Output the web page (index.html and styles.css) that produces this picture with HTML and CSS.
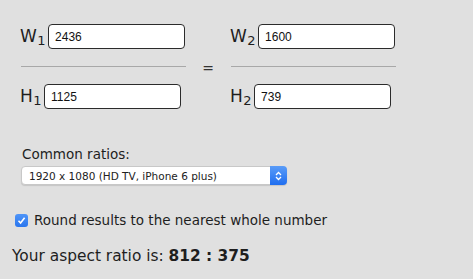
FILE: index.html
```html
<html>
<head>
<meta charset="utf-8">
<title>Aspect Ratio Calculator</title>
<link rel="stylesheet" href="styles.css">
</head>
<body>

<div id="calc">
	<div class="fraction">
		<div class="row">
			<span class="dim">W<sub>1</sub></span>
			<input class="num" type="text" value="2436">
		</div>
		<div class="bar"></div>
		<div class="row">
			<span class="dim">H<sub>1</sub></span>
			<input class="num" type="text" value="1125">
		</div>
	</div>

	<div class="equals">=</div>

	<div class="fraction">
		<div class="row">
			<span class="dim">W<sub>2</sub></span>
			<input class="num" type="text" value="1600">
		</div>
		<div class="bar"></div>
		<div class="row">
			<span class="dim">H<sub>2</sub></span>
			<input class="num" type="text" value="739">
		</div>
	</div>
</div>

<div id="ratios">
	<div class="caption">Common ratios:</div>
	<div class="picker">
		<select>
			<option>1920 x 1080 (HD TV, iPhone 6 plus)</option>
		</select>
		<span class="stepper">
			<svg width="7" height="10" viewBox="0 0 7 10">
				<path d="M1 4 L3.5 1.5 L6 4" fill="none" stroke="white" stroke-width="1.3"/>
				<path d="M1 6 L3.5 8.5 L6 6" fill="none" stroke="white" stroke-width="1.3"/>
			</svg>
		</span>
	</div>
</div>

<label class="round">
	<span class="box">
		<svg width="9" height="9" viewBox="0 0 9 9">
			<path d="M1.5 4.8 L3.6 7 L7.6 1.8" fill="none" stroke="white" stroke-width="1.6"/>
		</svg>
	</span>
	Round results to the nearest whole number
</label>

<div class="result">Your aspect ratio is: <b>812 : 375</b></div>

</body>
</html>
```

FILE: styles.css
```css
body {
	margin: 0;
	background-color: #e0e0e0;
	color: #1e1e1e;
	font-family: "DejaVu Sans", Verdana, sans-serif;
}

#calc {
	display: flex;
	align-items: center;
	padding: 24px 0 0 20px;
}

.fraction {
	display: flex;
	flex-direction: column;
	width: 166px;
}

.row {
	display: flex;
	align-items: center;
	height: 25px;
}

.dim {
	font-size: 17px;
	line-height: 25px;
	margin-right: 3px;
	letter-spacing: -0.5px;
}

.dim sub {
	font-size: 13px;
	vertical-align: -3px;
	line-height: 0;
	margin-left: 1px;
}

.num {
	width: 137px;
	height: 25px;
	box-sizing: border-box;
	border: 1px solid #2b2b2b;
	border-radius: 4px;
	background: white;
	padding: 0 6px;
	font-family: "Liberation Sans", Arial, sans-serif;
	font-size: 12px;
	color: #111;
	outline: none;
}

.bar {
	height: 1px;
	background: #a8a8a8;
	margin: 17px 0 17px 1px;
	width: 165px;
}

.equals {
	width: 44px;
	text-align: center;
	font-size: 14px;
	margin-top: 3px;
	color: #333;
}

#ratios {
	padding: 37px 0 0 21px;
}

.caption {
	font-size: 13.5px;
	margin-bottom: 4px;
	padding-left: 1px;
}

.picker {
	position: relative;
	width: 266px;
	height: 19px;
}

.picker select {
	appearance: none;
	-webkit-appearance: none;
	width: 266px;
	height: 19px;
	border: 1px solid #c8c8c8;
	border-radius: 4px;
	background: white;
	padding: 0 0 0 7px;
	font-family: "DejaVu Sans", Verdana, sans-serif;
	font-size: 10.5px;
	color: #222;
	box-shadow: 0 1px 1px rgba(0,0,0,0.12);
	outline: none;
}

.stepper {
	position: absolute;
	right: 0;
	top: 0;
	width: 17px;
	height: 19px;
	border-radius: 0 4px 4px 0;
	background: linear-gradient(#5a9cf8, #1f6ef0);
	display: flex;
	align-items: center;
	justify-content: center;
}

.round {
	display: flex;
	align-items: center;
	margin: 27px 0 0 15px;
	font-size: 13.5px;
}

.box {
	width: 13px;
	height: 13px;
	border-radius: 3px;
	background: linear-gradient(#4f95f8, #2a76ee);
	display: flex;
	align-items: center;
	justify-content: center;
	margin-right: 6px;
}

.result {
	margin: 19px 0 0 12px;
	font-size: 15.4px;
}

.result b {
	font-weight: bold;
}
```
